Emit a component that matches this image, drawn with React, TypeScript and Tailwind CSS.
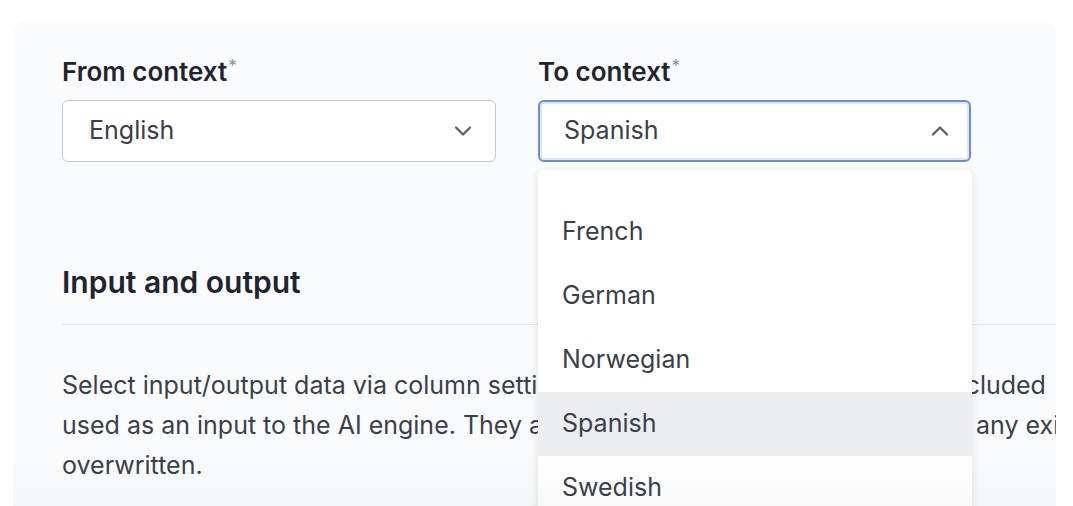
import React from 'react';
import { ChevronDown, ChevronUp } from 'lucide-react';

const OPTIONS = ['French', 'German', 'Norwegian', 'Spanish', 'Swedish'];

function Label({ text }: { text: string }) {
  return (
    <div className="flex items-start h-[28px] mb-[14px]">
      <span className="text-[26px] leading-[28px] font-semibold text-[#1f2430]">{text}</span>
      <span className="ml-[1px] text-[17px] leading-[16px] text-[#8a8f99]">*</span>
    </div>
  );
}

export default function App() {
  return (
    <div className="w-[1073px] h-[506px] bg-white pt-[22px] pl-[13px] pr-[17px] overflow-hidden font-['Inter',sans-serif]">
      <div className="relative h-[520px] rounded-t-[10px] bg-[#fafbfd] overflow-hidden pl-[49px] pt-[36px]">
        <div className="flex gap-[42px]">
          <div className="w-[434px]">
            <Label text="From context" />
            <div className="h-[62px] rounded-[6px] border border-[#c4c8cf] bg-white flex items-center justify-between pl-[26px] pr-[18px]">
              <span className="text-[25px] text-[#3a3f4b]">English</span>
              <ChevronDown className="w-[28px] h-[28px] text-[#5b606b]" strokeWidth={2} />
            </div>
          </div>
          <div className="w-[433px]">
            <Label text="To context" />
            <div className="h-[62px] rounded-[6px] border-2 border-[#6b8ed0] shadow-[inset_0_0_0_2px_#dce6f7] bg-white flex items-center justify-between pl-[24px] pr-[15px]">
              <span className="text-[25px] text-[#3a3f4b]">Spanish</span>
              <ChevronUp className="w-[28px] h-[28px] text-[#5b606b]" strokeWidth={2} />
            </div>
          </div>
        </div>

        <h2 className="mt-[104px] text-[30px] leading-[32px] font-semibold text-[#1f2430]">Input and output</h2>
        <div className="mt-[26px] h-px bg-[#e2e4e8]" />

        <p className="mt-[40px] text-[25px] leading-[40px] text-[#3a3f4b] whitespace-nowrap">
          Select input/output data via column settings. Columns set as inputs will be included
          <br />
          used as an input to the AI engine. They are translated and results will replace any existing
          <br />
          overwritten.
        </p>

        {/* open dropdown */}
        <div className="absolute left-[525px] top-[148px] w-[434px] rounded-t-[6px] bg-white shadow-[0_2px_10px_rgba(20,30,50,0.12)] pt-[30px]">
          {OPTIONS.map((o) => (
            <div
              key={o}
              className={`h-[64px] flex items-center px-[24px] text-[25px] text-[#3a3f4b] ${o === 'Spanish' ? 'bg-[#ecedf1]' : ''}`}
            >
              {o}
            </div>
          ))}
        </div>

        {/* bottom fade */}
        <div className="absolute left-0 right-0 top-[430px] h-[60px] bg-gradient-to-b from-transparent to-[rgba(60,90,80,0.04)] pointer-events-none" />
      </div>
    </div>
  );
}
